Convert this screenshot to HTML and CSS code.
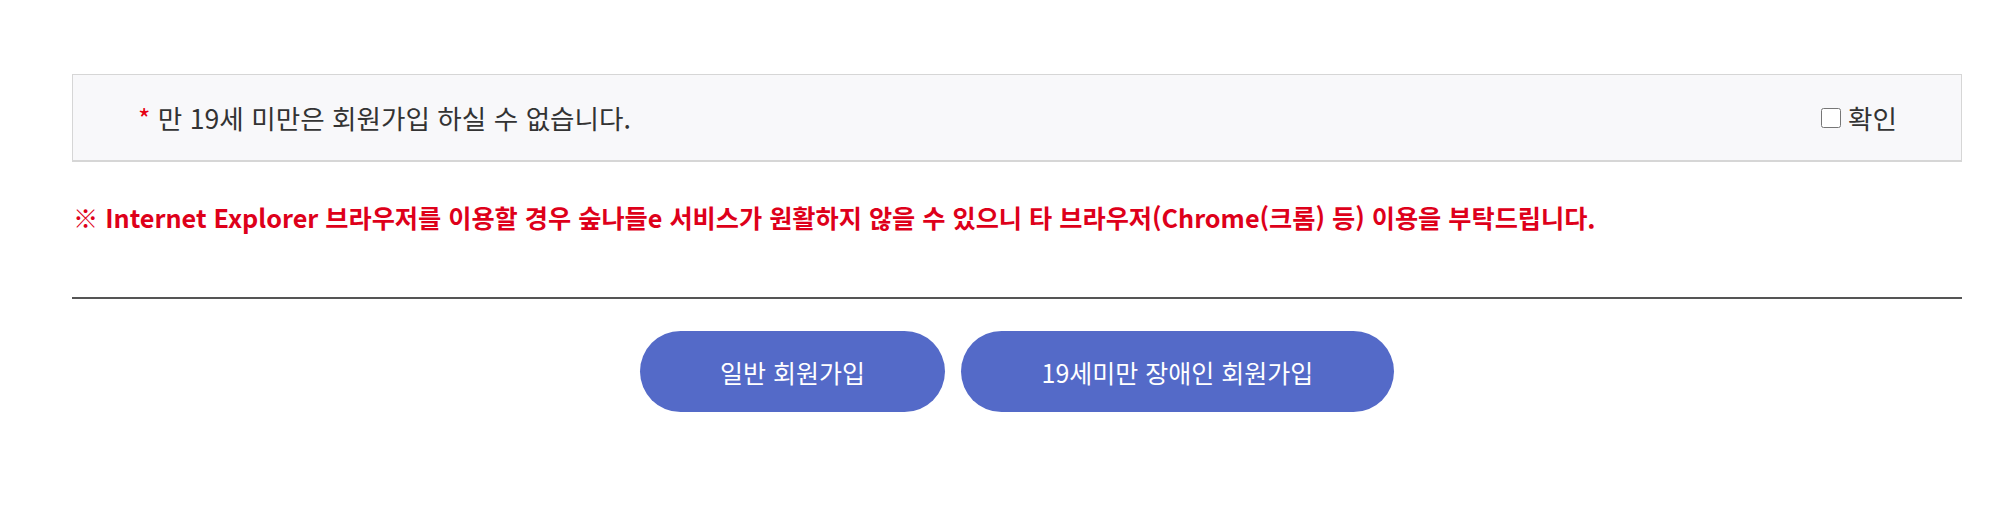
FILE: index.html
```html
<!DOCTYPE html>
<html lang="ko">

<head>
    <meta charset="UTF-8" />
    <meta name="viewport" content="width=device-width, initial-scale=1.0" />
    <title>회원가입</title>
    <link rel="stylesheet" href="styles.css">
</head>

<body>
    <div class="join-wrap">
        <div class="age-box">
            <p class="age-notice"><span class="star">*</span> 만 19세 미만은 회원가입 하실 수 없습니다.</p>
            <label class="agree">
                <input type="checkbox" name="ageCheck" /> 확인
            </label>
        </div>

        <p class="ie-notice">※ Internet Explorer 브라우저를 이용할 경우 숲나들e 서비스가 원활하지 않을 수 있으니 타 브라우저(Chrome(크롬) 등) 이용을 부탁드립니다.</p>

        <div class="btn-area">
            <a href="#" class="btn-join btn-normal">일반 회원가입</a>
            <a href="#" class="btn-join btn-disabled">19세미만 장애인 회원가입</a>
        </div>
    </div>
</body>

</html>
```

FILE: styles.css
```css
body {
    margin: 0;
    background-color: #fff;
    font-family: "Noto Sans CJK KR", "Noto Sans", sans-serif;
}

.join-wrap {
    margin: 74px 29px 0 72px;
}

.age-box {
    box-sizing: border-box;
    height: 88px;
    display: flex;
    align-items: center;
    justify-content: space-between;
    padding: 0 64px 0 65px;
    background-color: #f8f8fa;
    border: 1px solid #d6d6d6;
    border-bottom-width: 2px;
}

.age-notice {
    margin: 0;
    font-size: 26.6px;
    color: #333;
}

.age-notice .star {
    color: #e60012;
}

.agree {
    display: flex;
    align-items: center;
    font-size: 26.6px;
    color: #333;
}

.agree input[type="checkbox"] {
    width: 20px;
    height: 20px;
    margin: 0 7px 0 0;
}

.ie-notice {
    margin: 37px 0 62px 1px;
    font-size: 25.2px;
    line-height: 36px;
    font-weight: bold;
    color: #de001a;
}

.btn-area {
    border-top: 2px solid #555;
    padding-top: 32px;
    display: flex;
    justify-content: center;
    gap: 16px;
}

.btn-join {
    height: 81px;
    display: flex;
    align-items: center;
    justify-content: center;
    border-radius: 41px;
    background-color: #546ac8;
    color: #fff;
    font-size: 25px;
    text-decoration: none;
}

.btn-normal {
    width: 305px;
}

.btn-disabled {
    width: 433px;
}
```
